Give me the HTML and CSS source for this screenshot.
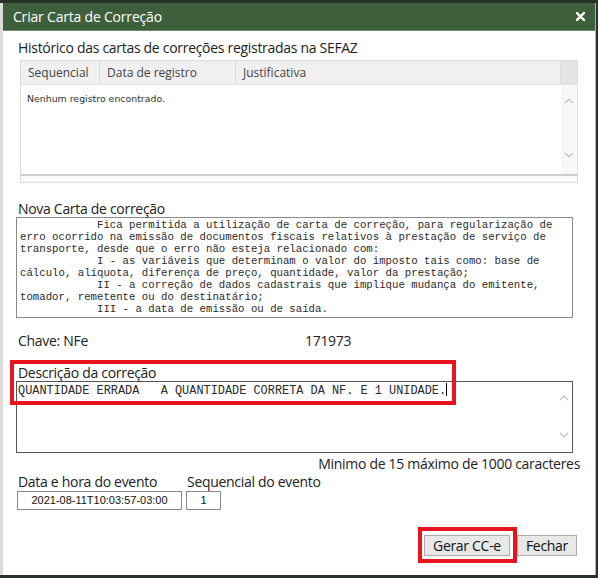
FILE: index.html
```html
<!DOCTYPE html>
<html lang="pt-BR">
<head>
    <meta charset="UTF-8">
    <title>Criar Carta de Correção</title>
    <link rel="stylesheet" href="styles.css">
</head>
<body>
    <div class="dialog">
        <div class="titlebar">
            <span class="title">Criar Carta de Correção</span>
            <svg class="close" width="9" height="9" viewBox="0 0 9 9">
                <path d="M1 1 L8 8 M8 1 L1 8" stroke="#fff" stroke-width="2.4" stroke-linecap="square"/>
            </svg>
        </div>
        <div class="content">
            <div class="heading">Histórico das cartas de correções registradas na SEFAZ</div>
            <div class="grid">
                <div class="grid-head">
                    <div class="col col-seq">Sequencial</div>
                    <div class="col col-data">Data de registro</div>
                    <div class="col col-just">Justificativa</div>
                    <div class="col-scroll"></div>
                </div>
                <div class="grid-body">
                    <div class="empty">Nenhum registro encontrado.</div>
                    <div class="vscroll">
                        <svg width="10" height="6" viewBox="0 0 10 6"><path d="M1 5 L5 1 L9 5" fill="none" stroke="#c4c4c4" stroke-width="1.4"/></svg>
                        <svg width="10" height="6" viewBox="0 0 10 6"><path d="M1 1 L5 5 L9 1" fill="none" stroke="#c4c4c4" stroke-width="1.4"/></svg>
                    </div>
                </div>
                <div class="hscroll"></div>
            </div>

            <div class="label label-nova">Nova Carta de correção</div>
            <div class="memo">            Fica permitida a utilização de carta de correção, para regularização de
erro ocorrido na emissão de documentos fiscais relativos à prestação de serviço de
transporte, desde que o erro não esteja relacionado com:
            I - as variáveis que determinam o valor do imposto tais como: base de
cálculo, alíquota, diferença de preço, quantidade, valor da prestação;
            II - a correção de dados cadastrais que implique mudança do emitente,
tomador, remetente ou do destinatário;
            III - a data de emissão ou de saída.</div>

            <div class="chave">
                <span>Chave: NFe</span>
                <span class="chave-num">171973</span>
            </div>

            <div class="descricao">
                <div class="label">Descrição da correção</div>
                <div class="desc-box">
                    <div class="desc-text">QUANTIDADE ERRADA   A QUANTIDADE CORRETA DA NF. E 1 UNIDADE.<span class="caret"></span></div>
                    <div class="vscroll vscroll-desc">
                        <svg width="10" height="6" viewBox="0 0 10 6"><path d="M1 5 L5 1 L9 5" fill="none" stroke="#c4c4c4" stroke-width="1.4"/></svg>
                        <svg width="10" height="6" viewBox="0 0 10 6"><path d="M1 1 L5 5 L9 1" fill="none" stroke="#c4c4c4" stroke-width="1.4"/></svg>
                    </div>
                </div>
                <div class="mark mark-desc"></div>
            </div>
            <div class="hint">Minimo de 15 máximo de 1000 caracteres</div>

            <div class="evento">
                <div class="field">
                    <div class="label">Data e hora do evento</div>
                    <div class="input input-data">2021-08-11T10:03:57-03:00</div>
                </div>
                <div class="field">
                    <div class="label">Sequencial do evento</div>
                    <div class="input input-seq">1</div>
                </div>
            </div>

            <div class="actions">
                <div class="btn-wrap">
                    <button class="button">Gerar CC-e</button>
                    <div class="mark mark-btn"></div>
                </div>
                <button class="button button-fechar">Fechar</button>
            </div>
        </div>
    </div>
</body>
</html>
```

FILE: styles.css
```css
body {
    margin: 0;
    padding: 3px 2px 3px 0;
    background-color: #263326;
    font-family: 'Open Sans', 'Noto Sans', sans-serif;
    color: #222;
}
.dialog {
    height: 572px;
    background-color: white;
    border-left: 3px solid #dcdcdc;
    border-right: 1px solid #b4b4b4;
    box-sizing: border-box;
}
.titlebar {
    height: 28px;
    background-color: #3d5f3b;
    border-bottom: 1px solid #6d8a6b;
    box-sizing: border-box;
    display: flex;
    align-items: center;
    justify-content: space-between;
    padding: 0 10px 0 10px;
}
.title {
    color: white;
    font-size: 14px;
    letter-spacing: -0.2px;
}
.close {
    margin-bottom: 1px;
}
.content {
    padding: 8px 16px 0 15px;
}
.heading, .label, .chave, .hint {
    font-size: 14px;
    line-height: 18px;
    letter-spacing: -0.3px;
}
.grid {
    margin: 3px 0 0 2px;
    width: 558px;
    border: 1px solid #dcdcdc;
    box-sizing: border-box;
}
.grid-head {
    display: flex;
    height: 23px;
    background-color: #f0f0f0;
    border-bottom: 1px solid #e2e2e2;
    font-size: 12px;
    color: #444;
}
.col {
    display: flex;
    align-items: center;
    padding-left: 7px;
    border-right: 1px solid #dcdcdc;
}
.col-seq {
    width: 71px;
}
.col-data {
    width: 128px;
}
.col-just {
    flex: 1;
}
.col-scroll {
    width: 16px;
    background-color: #e4e4e4;
}
.grid-body {
    display: flex;
    height: 89px;
    border-bottom: 2px solid #cdcdcd;
}
.empty {
    flex: 1;
    padding: 8px 0 0 6px;
    font-family: 'DejaVu Sans', sans-serif;
    font-size: 9.4px;
    color: #333;
}
.vscroll {
    width: 16px;
    background-color: #f8f8f8;
    display: flex;
    flex-direction: column;
    justify-content: space-between;
    align-items: center;
    padding: 13px 0 16px 0;
    box-sizing: border-box;
}
.hscroll {
    height: 6px;
    background-color: #fafafa;
}
.label-nova {
    margin-top: 17px;
}
.memo {
    margin-top: -1px;
    margin-left: -2px;
    width: 557px;
    height: 101px;
    border: 1px solid #8a8a8a;
    box-sizing: border-box;
    padding: 1px 0 0 3px;
    font-family: 'Liberation Mono', monospace;
    font-size: 10.7px;
    line-height: 12px;
    white-space: pre;
    overflow: hidden;
    color: #2a2a2a;
}
.chave {
    margin-top: 14px;
    display: flex;
}
.chave-num {
    margin-left: 217px;
}
.descricao {
    position: relative;
    margin-top: 14px;
}
.desc-box {
    margin-left: -2px;
    margin-top: -1px;
    width: 557px;
    height: 72px;
    border: 1px solid #555;
    box-sizing: border-box;
    display: flex;
}
.desc-text {
    flex: 1;
    padding: 1px 0 0 1px;
    font-family: 'Liberation Mono', monospace;
    font-size: 11.9px;
    line-height: 14px;
    white-space: pre;
    color: #2a2a2a;
}
.caret {
    display: inline-block;
    width: 0;
    height: 13px;
    border-left: 1px solid #000;
    vertical-align: -2px;
}
.vscroll-desc {
    background-color: white;
    padding: 13px 0 14px 0;
}
.mark {
    position: absolute;
    border: 4px solid #e8141e;
}
.mark-desc {
    left: -8px;
    top: -4px;
    width: 438px;
    height: 37px;
}
.hint {
    text-align: right;
    margin-top: 2px;
    margin-right: -1px;
}
.evento {
    display: flex;
    gap: 5px;
}
.input {
    border: 1px solid #8a8a8a;
    height: 19px;
    box-sizing: border-box;
    font-family: 'Liberation Sans', sans-serif;
    font-size: 11px;
    line-height: 17px;
    text-align: center;
    color: #111;
    margin-left: -1px;
}
.input-data {
    width: 165px;
}
.input-seq {
    width: 35px;
}
.actions {
    display: flex;
    justify-content: flex-end;
    align-items: center;
    gap: 7px;
    margin-top: 25px;
    margin-right: 2px;
}
.btn-wrap {
    position: relative;
}
.button {
    display: block;
    font-family: 'Open Sans', 'Noto Sans', sans-serif;
    font-size: 14px;
    letter-spacing: -0.3px;
    color: #111;
    background-color: #e8e8e8;
    border: 1px solid #adadad;
    height: 21px;
    padding: 0 8px;
    line-height: 18px;
}
.mark-btn {
    left: -6px;
    top: -8px;
    right: -7px;
    bottom: -7px;
}
```
